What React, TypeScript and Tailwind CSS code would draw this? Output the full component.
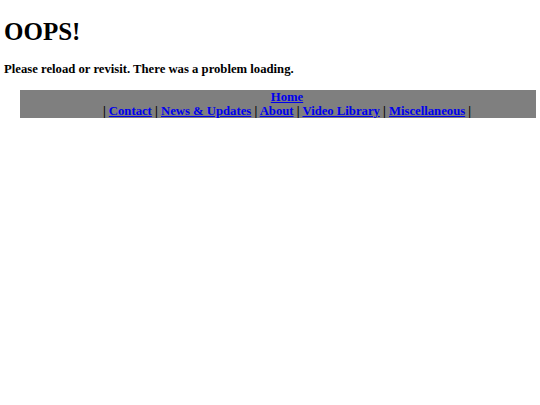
export default function App() {
  const link = "text-[#0000ee] underline";
  return (
    <div className="bg-white w-[540px] h-[405px] font-['Liberation_Serif',serif] text-black">
      <div className="pl-[4px] pt-[17px]">
        <h1 className="text-[25px] leading-[29px] font-bold m-0">OOPS!</h1>
        <p className="text-[12.7px] leading-[15px] font-bold mt-[16px]">Please reload or revisit. There was a problem loading.</p>
      </div>
      <div className="ml-[20px] mt-[13px] w-[516px] h-[28px] pl-[18px] bg-[#7f7f7f] text-center text-[12.7px] leading-[14px] font-bold">
        <div><a className={link} href="#">Home</a></div>
        <div>
          | <a className={link} href="#">Contact</a> | <a className={link} href="#">News &amp; Updates</a> |{" "}
          <a className={link} href="#">About</a> | <a className={link} href="#">Video Library</a> |{" "}
          <a className={link} href="#">Miscellaneous</a> |
        </div>
      </div>
    </div>
  );
}
